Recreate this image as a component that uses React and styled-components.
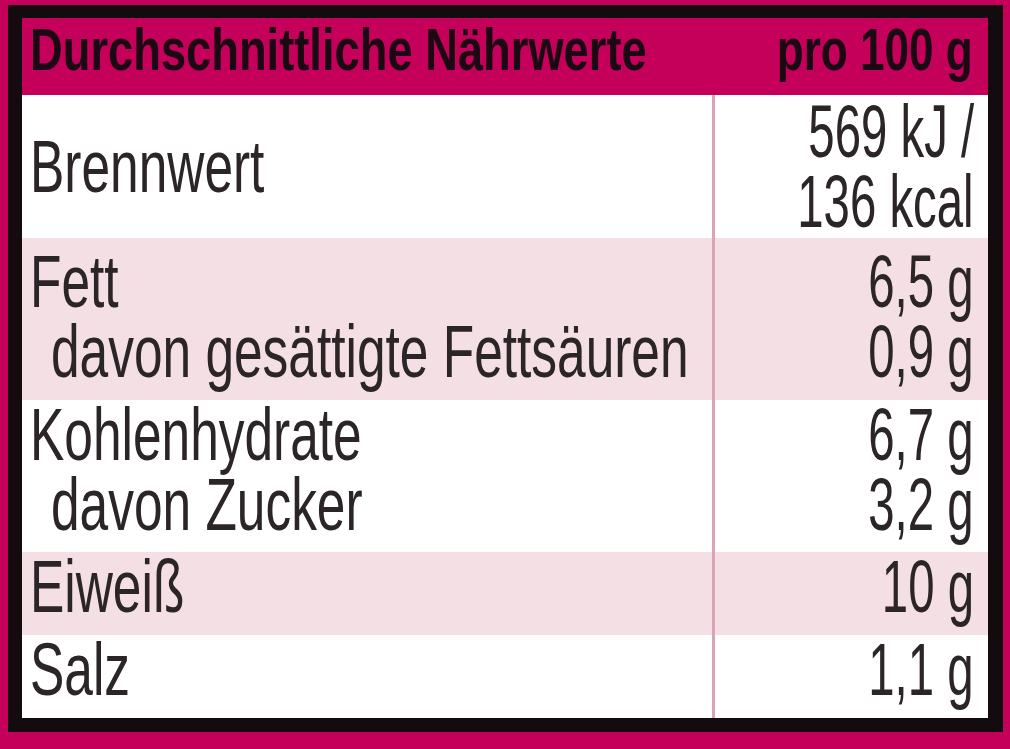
import React from 'react';
import styled, { createGlobalStyle } from 'styled-components';

const GlobalStyle = createGlobalStyle`
  html, body {
    margin: 0;
    padding: 0;
    background: #c4005a;
  }
  body {
    font-family: "Liberation Sans", Arial, sans-serif;
  }
`;

const Page = styled.div`
  width: 1010px;
  height: 749px;
  box-sizing: border-box;
  padding: 5px 7px 0 8px;
  background: #c4005a;
  overflow: hidden;
`;

const Frame = styled.div`
  width: 995px;
  box-sizing: border-box;
  border: 14px solid #140b0f;
  border-top-width: 13px;
  border-right-width: 15px;
  background: #fff;
`;

const Header = styled.div`
  display: grid;
  grid-template-columns: minmax(0, 1fr) auto;
  height: 77px;
  box-sizing: border-box;
  padding: 0 15px 0 8px;
  background: #c4005a;
  color: #1c0812;
  font-weight: 700;
  font-size: 60px;
  line-height: 63px;
  white-space: nowrap;
`;

const HeadCell = styled.div`
  display: flex;
  justify-content: ${(p) => (p.$right ? 'flex-end' : 'flex-start')};
  min-width: 0;
`;

const Squeeze = styled.span`
  display: inline-block;
  flex-shrink: 0;
  white-space: nowrap;
  transform: scaleX(${(p) => p.$sx});
  transform-origin: ${(p) => p.$origin} center;
`;

const Row = styled.div`
  display: grid;
  grid-template-columns: 690px minmax(0, 1fr);
  height: ${(p) => p.$h}px;
  background: ${(p) => (p.$shade ? '#f3dfe4' : '#fff')};
  color: #2b2527;
  font-size: 74px;
  line-height: 70px;
`;

const Cell = styled.div`
  display: flex;
  flex-direction: column;
  justify-content: ${(p) => (p.$center ? 'center' : 'flex-start')};
  box-sizing: border-box;
  padding-top: ${(p) => p.$pt}px;
  min-width: 0;
`;

const LabelCell = styled(Cell)`
  padding-left: 8px;
`;

const ValueCell = styled(Cell)`
  border-left: 3px solid #d9a4b7;
  padding-right: 14px;
`;

const Line = styled.div`
  display: flex;
  justify-content: ${(p) => (p.$right ? 'flex-end' : 'flex-start')};
  padding-left: ${(p) => (p.$indent ? 21 : 0)}px;
  white-space: nowrap;
`;

const LABEL_SX = 0.695;
const VALUE_SX = 0.64;
const HEAD_SX = 0.755;

const rows = [
  { h: 143, shade: false, center: true, pt: 0, labels: [['Brennwert', false]], values: ['569 kJ /', '136 kcal'] },
  {
    h: 162,
    shade: true,
    pt: 9,
    labels: [
      ['Fett', false],
      ['davon gesättigte Fettsäuren', true],
    ],
    values: ['6,5 g', '0,9 g'],
  },
  {
    h: 152,
    shade: false,
    pt: 0,
    labels: [
      ['Kohlenhydrate', false],
      ['davon Zucker', true],
    ],
    values: ['6,7 g', '3,2 g'],
  },
  { h: 83, shade: true, pt: 0, labels: [['Eiweiß', false]], values: ['10 g'] },
  { h: 83, shade: false, pt: 0, labels: [['Salz', false]], values: ['1,1 g'] },
];

export default function App() {
  return (
    <>
      <GlobalStyle />
      <Page>
        <Frame>
          <Header>
            <HeadCell>
              <Squeeze $sx={HEAD_SX} $origin="left">Durchschnittliche Nährwerte</Squeeze>
            </HeadCell>
            <HeadCell $right>
              <Squeeze $sx={0.735} $origin="right">pro 100 g</Squeeze>
            </HeadCell>
          </Header>
          {rows.map((r, i) => (
            <Row key={i} $h={r.h} $shade={r.shade}>
              <LabelCell $center={r.center} $pt={r.pt}>
                {r.labels.map(([text, indent]) => (
                  <Line key={text} $indent={indent}>
                    <Squeeze $sx={LABEL_SX} $origin="left">{text}</Squeeze>
                  </Line>
                ))}
              </LabelCell>
              <ValueCell $center={r.center} $pt={r.pt}>
                {r.values.map((v) => (
                  <Line key={v} $right>
                    <Squeeze $sx={VALUE_SX} $origin="right">{v}</Squeeze>
                  </Line>
                ))}
              </ValueCell>
            </Row>
          ))}
        </Frame>
      </Page>
    </>
  );
}
